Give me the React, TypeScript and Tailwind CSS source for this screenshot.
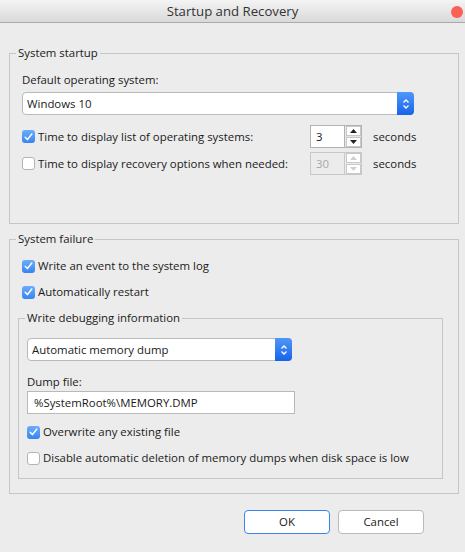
import React from 'react'

const CheckBox = ({ checked }: { checked?: boolean }) =>
  checked ? (
    <span className="flex h-[13px] w-[13px] shrink-0 items-center justify-center rounded-[3px] bg-linear-to-b from-[#6aaefa] to-[#3784f2]">
      <svg width="9" height="8" viewBox="0 0 9 8" fill="none">
        <path d="M1.2 4.2 L3.4 6.6 L7.8 1" stroke="white" strokeWidth="1.5" strokeLinecap="round" strokeLinejoin="round" />
      </svg>
    </span>
  ) : (
    <span className="h-[13px] w-[13px] shrink-0 rounded-[3px] border border-[#b4b4b4] bg-white" />
  )

const CheckRow = ({ checked, label }: { checked?: boolean; label: string }) => (
  <div className="flex h-[16px] items-center gap-x-[3px]">
    <CheckBox checked={checked} />
    <span>{label}</span>
  </div>
)

const Chevrons = () => (
  <svg width="8" height="12" viewBox="0 0 8 12" fill="none">
    <path d="M1.5 4.5 L4 2 L6.5 4.5" stroke="white" strokeWidth="1.3" />
    <path d="M1.5 7.5 L4 10 L6.5 7.5" stroke="white" strokeWidth="1.3" />
  </svg>
)

const Select = ({ value, width }: { value: string; width: string }) => (
  <div className={`flex h-[23px] items-center rounded-[4px] border border-[#bababa] bg-white ${width}`}>
    <span className="flex-1 pl-[4px]">{value}</span>
    <span className="-my-px -mr-px flex h-[23px] w-[17px] items-center justify-center rounded-r-[4px] bg-linear-to-b from-[#4f97f8] to-[#1663ea]">
      <Chevrons />
    </span>
  </div>
)

const Arrow = ({ up, disabled }: { up?: boolean; disabled?: boolean }) => (
  <span className="flex h-[11px] w-[15px] items-center justify-center border border-[#c8c8c8] bg-white">
    <svg width="7" height="4" viewBox="0 0 7 4">
      <path
        d={up ? 'M0 4 L3.5 0 L7 4 Z' : 'M0 0 L3.5 4 L7 0 Z'}
        fill={disabled ? '#cfcfcf' : '#222'}
      />
    </svg>
  </span>
)

const Spinner = ({ value, disabled }: { value: string; disabled?: boolean }) => (
  <div className="flex">
    <div
      className={
        disabled
          ? 'flex h-[23px] w-[35px] items-center border border-[#c8c8c8] bg-[#ececec] pl-[5px] text-[#a8a8a8]'
          : 'flex h-[23px] w-[35px] items-center border border-[#b3b3b3] bg-white pl-[5px]'
      }
    >
      {value}
    </div>
    <div
      className={`flex h-[23px] w-[17px] flex-col items-center justify-center gap-px border border-l-0 ${disabled ? 'border-[#c8c8c8] bg-[#ececec]' : 'border-[#b3b3b3] bg-[#e6e6e6]'}`}
    >
      <Arrow up disabled={disabled} />
      <Arrow disabled={disabled} />
    </div>
  </div>
)

export default function App() {
  return (
    <div className="flex h-[552px] w-[465px] flex-col bg-[#ececec] font-['Segoe_UI','Open_Sans',sans-serif] text-[11.4px] leading-[16px] text-[#1a1a1a]">
      <div className="relative flex h-[23px] shrink-0 items-center justify-center border-b border-[#a9a9a9] bg-linear-to-b from-[#f4f4f4] to-[#d9d9d9] text-[13.2px] text-[#333]">
        Startup and Recovery
        <span className="absolute top-[6px] right-[2px] h-3 w-3 rounded-full bg-[#fc5f58]" />
      </div>

      <fieldset className="mt-[22px] ml-[9px] h-[179px] w-[450px] border border-[#c6c6c6]">
        <legend className="ml-[6px] px-[2px]">System startup</legend>
        <div className="flex flex-col pl-[12px]">
          <span className="mt-[11px]">Default operating system:</span>
          <div className="mt-[4px]">
            <Select value="Windows 10" width="w-[392px]" />
          </div>
          <div className="mt-[10px] flex items-center">
            <div className="w-[288px]">
              <CheckRow checked label="Time to display list of operating systems:" />
            </div>
            <Spinner value="3" />
            <span className="ml-[11px]">seconds</span>
          </div>
          <div className="mt-[4px] flex items-center">
            <div className="w-[288px]">
              <CheckRow label="Time to display recovery options when needed:" />
            </div>
            <Spinner value="30" disabled />
            <span className="ml-[11px]">seconds</span>
          </div>
        </div>
      </fieldset>

      <fieldset className="mt-[7px] ml-[9px] h-[263px] w-[450px] border border-[#c6c6c6]">
        <legend className="ml-[6px] px-[2px]">System failure</legend>
        <div className="flex flex-col pl-[8px]">
          <div className="mt-[11px] pl-[4px]">
            <CheckRow checked label="Write an event to the system log" />
          </div>
          <div className="mt-[10px] pl-[4px]">
            <CheckRow checked label="Automatically restart" />
          </div>
          <fieldset className="mt-[10px] h-[169px] w-[425px] border border-[#c6c6c6]">
            <legend className="ml-[6px] px-[2px]">Write debugging information</legend>
            <div className="flex flex-col pl-[8px]">
              <div className="mt-[12px]">
                <Select value="Automatic memory dump" width="w-[265px]" />
              </div>
              <span className="mt-[13px]">Dump file:</span>
              <div className="mt-[1px] flex h-[23px] w-[268px] items-center border border-[#b9b9b9] bg-white pl-[6px]">
                %SystemRoot%\MEMORY.DMP
              </div>
              <div className="mt-[10px]">
                <CheckRow checked label="Overwrite any existing file" />
              </div>
              <div className="mt-[10px]">
                <CheckRow label="Disable automatic deletion of memory dumps when disk space is low" />
              </div>
            </div>
          </fieldset>
        </div>
      </fieldset>

      <div className="mt-[16px] flex justify-end gap-x-[8px] pr-[41px]">
        <button className="flex h-[24px] w-[86px] items-center justify-center rounded-[4px] border border-[#3a84ee] bg-white">
          OK
        </button>
        <button className="flex h-[24px] w-[86px] items-center justify-center rounded-[4px] border border-[#b9b9b9] bg-white">
          Cancel
        </button>
      </div>
    </div>
  )
}
